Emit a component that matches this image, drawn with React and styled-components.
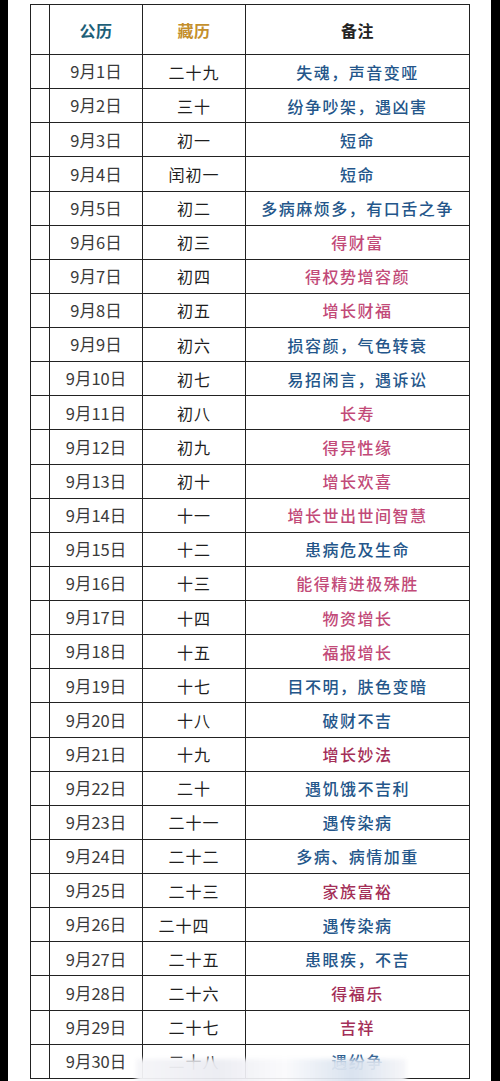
import React from "react";
import styled, { createGlobalStyle } from "styled-components";

const Global = createGlobalStyle`
  html, body { margin: 0; padding: 0; background: #000; }
  body { font-family: "Noto Sans CJK SC", "Noto Sans", sans-serif; }
`;

const Page = styled.div`
  width: 500px;
  height: 1081px;
  overflow: hidden;
  background: #000;
  display: flex;
  padding: 0 9px 0 8px;
  box-sizing: border-box;
`;

const Sheet = styled.div`
  flex: 1;
  background: #fff;
  padding: 4px 0 0 22px;
  position: relative;
  overflow: hidden;
`;

const Table = styled.div`
  display: grid;
  grid-template-columns: 19px 93px 103px 224px;
  grid-template-rows: 50px;
  grid-auto-rows: 34.13px;
  width: 440px;
  border-left: 1.5px solid #222;
  border-top: 1.5px solid #222;
  box-sizing: border-box;
`;

const Cell = styled.div`
  border-right: 1.5px solid #222;
  border-bottom: 1.5px solid #222;
  display: flex;
  align-items: center;
  justify-content: center;
  font-size: 16px;
  line-height: 1;
  white-space: nowrap;
  box-sizing: border-box;
`;

const HeadCell = styled(Cell)`
  font-weight: 700;
  font-size: 16px;
  letter-spacing: 0.5px;
  color: ${(p) => p.$color || "#222"};
`;

const DateCell = styled(Cell)`
  color: #3a3a3a;
  font-weight: 400;
  font-size: 16.5px;
`;

const TibCell = styled(Cell)`
  color: #1e1e1e;
  letter-spacing: 1px;
  padding-right: ${(p) => (p.$shift ? "20px" : "0")};
`;

const NoteCell = styled(Cell)`
  letter-spacing: 1.5px;
  font-size: 16px;
  font-weight: 500;
  color: ${(p) =>
    p.$tone === "pink" ? "#c24a78" : p.$tone === "red" ? "#a42f58" : "#24568a"};
`;

const Watermark = styled.div`
  position: absolute;
  left: 128px;
  bottom: -4px;
  width: 270px;
  height: 26px;
  background: linear-gradient(
    90deg,
    rgba(245, 245, 248, 0.95) 0%,
    rgba(235, 236, 242, 0.95) 30%,
    rgba(250, 250, 252, 0.9) 55%,
    rgba(215, 225, 238, 0.95) 80%,
    rgba(245, 245, 248, 0.9) 100%
  );
  filter: blur(2px);
`;

const rows = [
  ["9月1日", "二十九", "失魂，声音变哑", "blue"],
  ["9月2日", "三十", "纷争吵架，遇凶害", "blue"],
  ["9月3日", "初一", "短命", "blue"],
  ["9月4日", "闰初一", "短命", "blue"],
  ["9月5日", "初二", "多病麻烦多，有口舌之争", "blue"],
  ["9月6日", "初三", "得财富", "pink"],
  ["9月7日", "初四", "得权势增容颜", "pink"],
  ["9月8日", "初五", "增长财福", "pink"],
  ["9月9日", "初六", "损容颜，气色转衰", "blue"],
  ["9月10日", "初七", "易招闲言，遇诉讼", "blue"],
  ["9月11日", "初八", "长寿", "pink"],
  ["9月12日", "初九", "得异性缘", "pink"],
  ["9月13日", "初十", "增长欢喜", "pink"],
  ["9月14日", "十一", "增长世出世间智慧", "pink"],
  ["9月15日", "十二", "患病危及生命", "blue"],
  ["9月16日", "十三", "能得精进极殊胜", "pink"],
  ["9月17日", "十四", "物资增长", "pink"],
  ["9月18日", "十五", "福报增长", "pink"],
  ["9月19日", "十七", "目不明，肤色变暗", "blue"],
  ["9月20日", "十八", "破财不吉", "blue"],
  ["9月21日", "十九", "增长妙法", "red"],
  ["9月22日", "二十", "遇饥饿不吉利", "blue"],
  ["9月23日", "二十一", "遇传染病", "blue"],
  ["9月24日", "二十二", "多病、病情加重", "blue"],
  ["9月25日", "二十三", "家族富裕", "red"],
  ["9月26日", "二十四", "遇传染病", "blue", true],
  ["9月27日", "二十五", "患眼疾，不吉", "blue"],
  ["9月28日", "二十六", "得福乐", "red"],
  ["9月29日", "二十七", "吉祥", "red"],
  ["9月30日", "二十八", "遇纷争", "blue"],
];

export default function App() {
  return (
    <>
      <Global />
      <Page>
        <Sheet>
          <Table>
            <Cell />
            <HeadCell $color="#1d5f78">公历</HeadCell>
            <HeadCell $color="#c48f2c">藏历</HeadCell>
            <HeadCell>备注</HeadCell>
            {rows.map(([d, t, n, tone, shift]) => (
              <React.Fragment key={d}>
                <Cell />
                <DateCell>{d}</DateCell>
                <TibCell $shift={shift}>{t}</TibCell>
                <NoteCell $tone={tone}>{n}</NoteCell>
              </React.Fragment>
            ))}
          </Table>
          <Watermark />
        </Sheet>
      </Page>
    </>
  );
}
